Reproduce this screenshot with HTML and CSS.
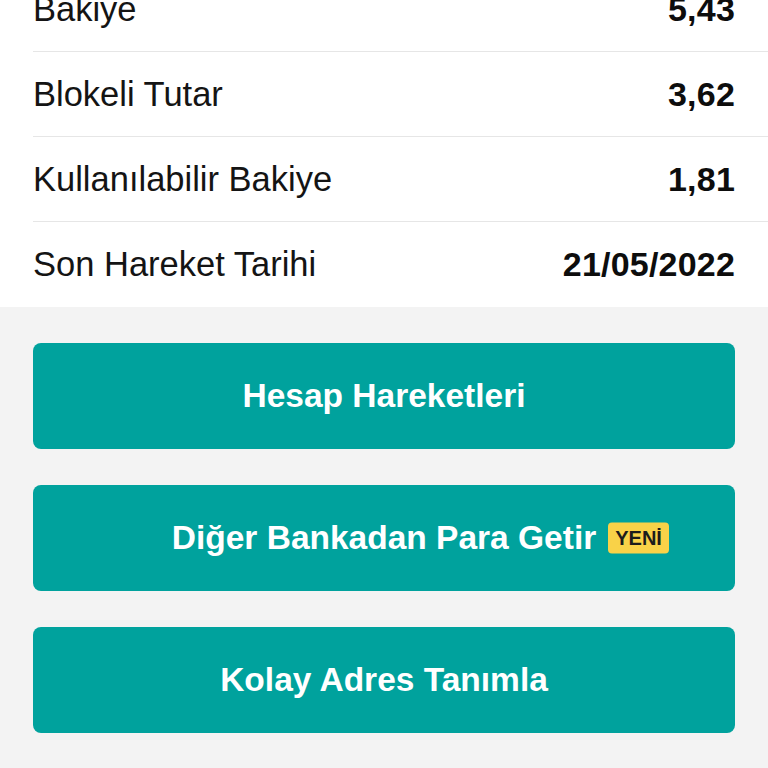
FILE: index.html
```html
<!DOCTYPE html>
<html lang="tr">
<head>
  <meta charset="UTF-8">
  <meta name="viewport" content="width=device-width,initial-scale=1">
  <title>Hesap Detayı</title>
  <link rel="stylesheet" href="styles.css">
</head>
<body>

  <ul class="summary">
    <li><span class="label">Bakiye</span><span class="value">5,43</span></li>
    <li><span class="label">Blokeli Tutar</span><span class="value">3,62</span></li>
    <li><span class="label">Kullanılabilir Bakiye</span><span class="value">1,81</span></li>
    <li><span class="label">Son Hareket Tarihi</span><span class="value">21/05/2022</span></li>
  </ul>

  <div class="actions">
    <a href="#" class="btn">Hesap Hareketleri</a>
    <a href="#" class="btn"><span class="btn-text">Diğer Bankadan Para Getir<span class="badge">YENİ</span></span></a>
    <a href="#" class="btn">Kolay Adres Tanımla</a>
    <a href="#" class="btn">Hesap Bilgileri</a>
  </div>

</body>
</html>
```

FILE: styles.css
```css
body { margin:0; background:#f3f3f3; font-family:"Liberation Sans", Arial, sans-serif; color:#111; overflow:hidden; }
.summary { list-style:none; margin:-33px 0 0; padding:0; background:#fff; }
.summary li { display:flex; justify-content:space-between; align-items:center; height:85px; margin-left:33px; padding-right:33px; border-bottom:1px solid #e6e6e6; box-sizing:border-box; }
.summary li:last-child { border-bottom:none; }
.label { font-size:34.5px; color:#141414; }
.value { font-size:34px; font-weight:bold; color:#0d0d0d; letter-spacing:0.2px; }
.actions { display:flex; flex-direction:column; gap:36px; padding:36px 33px; }
.btn { display:flex; align-items:center; justify-content:center; height:106px; background:#00a29d; border-radius:8px; color:#fff; font-size:33.5px; font-weight:bold; text-decoration:none; flex-shrink:0; }
.btn-text { position:relative; }
.badge { position:absolute; left:100%; top:50%; margin-left:12px; transform:translateY(-50%); background:#f9d248; color:#1c1c1c; font-size:20px; font-weight:bold; padding:4px 7px; border-radius:4px; line-height:23px; white-space:nowrap; }
```
